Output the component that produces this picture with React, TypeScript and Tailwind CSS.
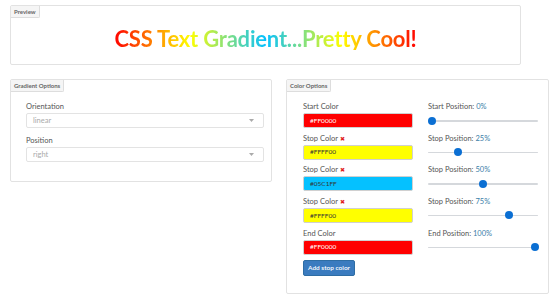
import React from "react";

const font = { fontFamily: "Lato, 'Open Sans', sans-serif" };

function Tab({ children }: { children: React.ReactNode }) {
  return (
    <div className="self-start bg-[#f5f5f5] border-r border-b border-[#ddd] rounded-br-[2px] px-[3px] h-[12px] flex items-center text-[6px] font-bold text-[#666] leading-none">
      {children}
    </div>
  );
}

function Select({ value }: { value: string }) {
  return (
    <div className="h-[15px] border border-[#e3e3e3] rounded-[2px] flex items-center justify-between pl-[6px] pr-[9px] text-[7.5px] text-[#aaa] bg-white">
      <span>{value}</span>
      <svg width="5" height="3" viewBox="0 0 5 3">
        <path d="M0 0 L5 0 L2.5 3 Z" fill="#aaa" />
      </svg>
    </div>
  );
}

type Row = {
  label: string;
  removable: boolean;
  color: string;
  text: string;
  textColor: string;
  posLabel: string;
  pos: number;
};

const rows: Row[] = [
  { label: "Start Color", removable: false, color: "#FF0000", text: "#FF0000", textColor: "#fff", posLabel: "Start Position:", pos: 0 },
  { label: "Stop Color", removable: true, color: "#FFFF00", text: "#FFFF00", textColor: "#333", posLabel: "Stop Position:", pos: 25 },
  { label: "Stop Color", removable: true, color: "#05C1FF", text: "#05C1FF", textColor: "#333", posLabel: "Stop Position:", pos: 50 },
  { label: "Stop Color", removable: true, color: "#FFFF00", text: "#FFFF00", textColor: "#333", posLabel: "Stop Position:", pos: 75 },
  { label: "End Color", removable: false, color: "#FF0000", text: "#FF0000", textColor: "#fff", posLabel: "End Position:", pos: 100 },
];

function Slider({ pos }: { pos: number }) {
  return (
    <div className="relative h-[15px] w-[110px]">
      <div className="absolute left-0 right-0 top-[7px] h-[1.5px] bg-[#d5d8dc] rounded" />
      <div
        className="absolute top-[3.5px] w-[8px] h-[8px] rounded-full bg-[#0b6fd3]"
        style={{ left: `${-0.3 + (pos / 100) * 103.3}px` }}
      />
    </div>
  );
}

export default function App() {
  return (
    <div className="w-[550px] h-[295px] bg-white overflow-hidden" style={font}>
      <div className="pt-[5px] pl-[10px]">
        <div className="w-[511px] h-[60px] border border-[#e2e2e2] rounded-[2px] flex flex-col">
          <Tab>Preview</Tab>
          <div className="flex justify-center pt-[10px]">
            <span
              className="inline-block text-[22px] font-bold leading-none tracking-[-0.2px]"
              style={{
                backgroundImage:
                  "linear-gradient(to right, #FF0000 0%, #FFFF00 25%, #05C1FF 50%, #FFFF00 75%, #FF0000 100%)",
                WebkitBackgroundClip: "text",
                backgroundClip: "text",
                color: "transparent",
              }}
            >
              CSS Text Gradient...Pretty Cool!
            </span>
          </div>
        </div>

        <div className="flex mt-[14px] gap-[14px] items-start">
          <div className="w-[262px] h-[103px] border border-[#e2e2e2] rounded-[2px] flex flex-col">
            <Tab>Gradient Options</Tab>
            <div className="pl-[15px] pr-[7px] pt-[10px] flex flex-col text-[7.5px] text-[#555]">
              <div className="leading-[10px] mb-[1px]">Orientation</div>
              <Select value="linear" />
              <div className="leading-[10px] mt-[8px] mb-[1px]">Position</div>
              <Select value="right" />
            </div>
          </div>

          <div className="w-[263px] h-[215px] border border-[#e2e2e2] rounded-[2px] flex flex-col">
            <Tab>Color Options</Tab>
            <div className="pl-[16px] pt-[10px] flex flex-col gap-[5.67px] text-[7.5px] text-[#555]">
              {rows.map((r, i) => (
                <div key={i} className="flex gap-[15px]">
                  <div className="w-[110px] flex flex-col">
                    <div className="leading-[10px] mb-[1px] flex items-center gap-[2px]">
                      <span>{r.label}</span>
                      {r.removable && (
                        <span className="text-[#e02020] text-[6px] leading-none">✖</span>
                      )}
                    </div>
                    <div
                      className="h-[15px] border border-[#d0d0d0] rounded-[2px] flex items-center pl-[6px] text-[6.5px]"
                      style={{ backgroundColor: r.color, color: r.textColor }}
                    >
                      {r.text}
                    </div>
                  </div>
                  <div className="w-[110px] flex flex-col">
                    <div className="leading-[10px] mb-[1px]">
                      {r.posLabel} <span className="text-[#3b7ea8]">{r.pos}%</span>
                    </div>
                    <Slider pos={r.pos} />
                  </div>
                </div>
              ))}
              <div>
                <button className="w-[52px] h-[16px] bg-[#3a7bbf] border border-[#2e6da4] rounded-[2px] text-white text-[6.5px] font-semibold leading-none flex items-center justify-center">
                  Add stop color
                </button>
              </div>
            </div>
          </div>
        </div>
      </div>
    </div>
  );
}
